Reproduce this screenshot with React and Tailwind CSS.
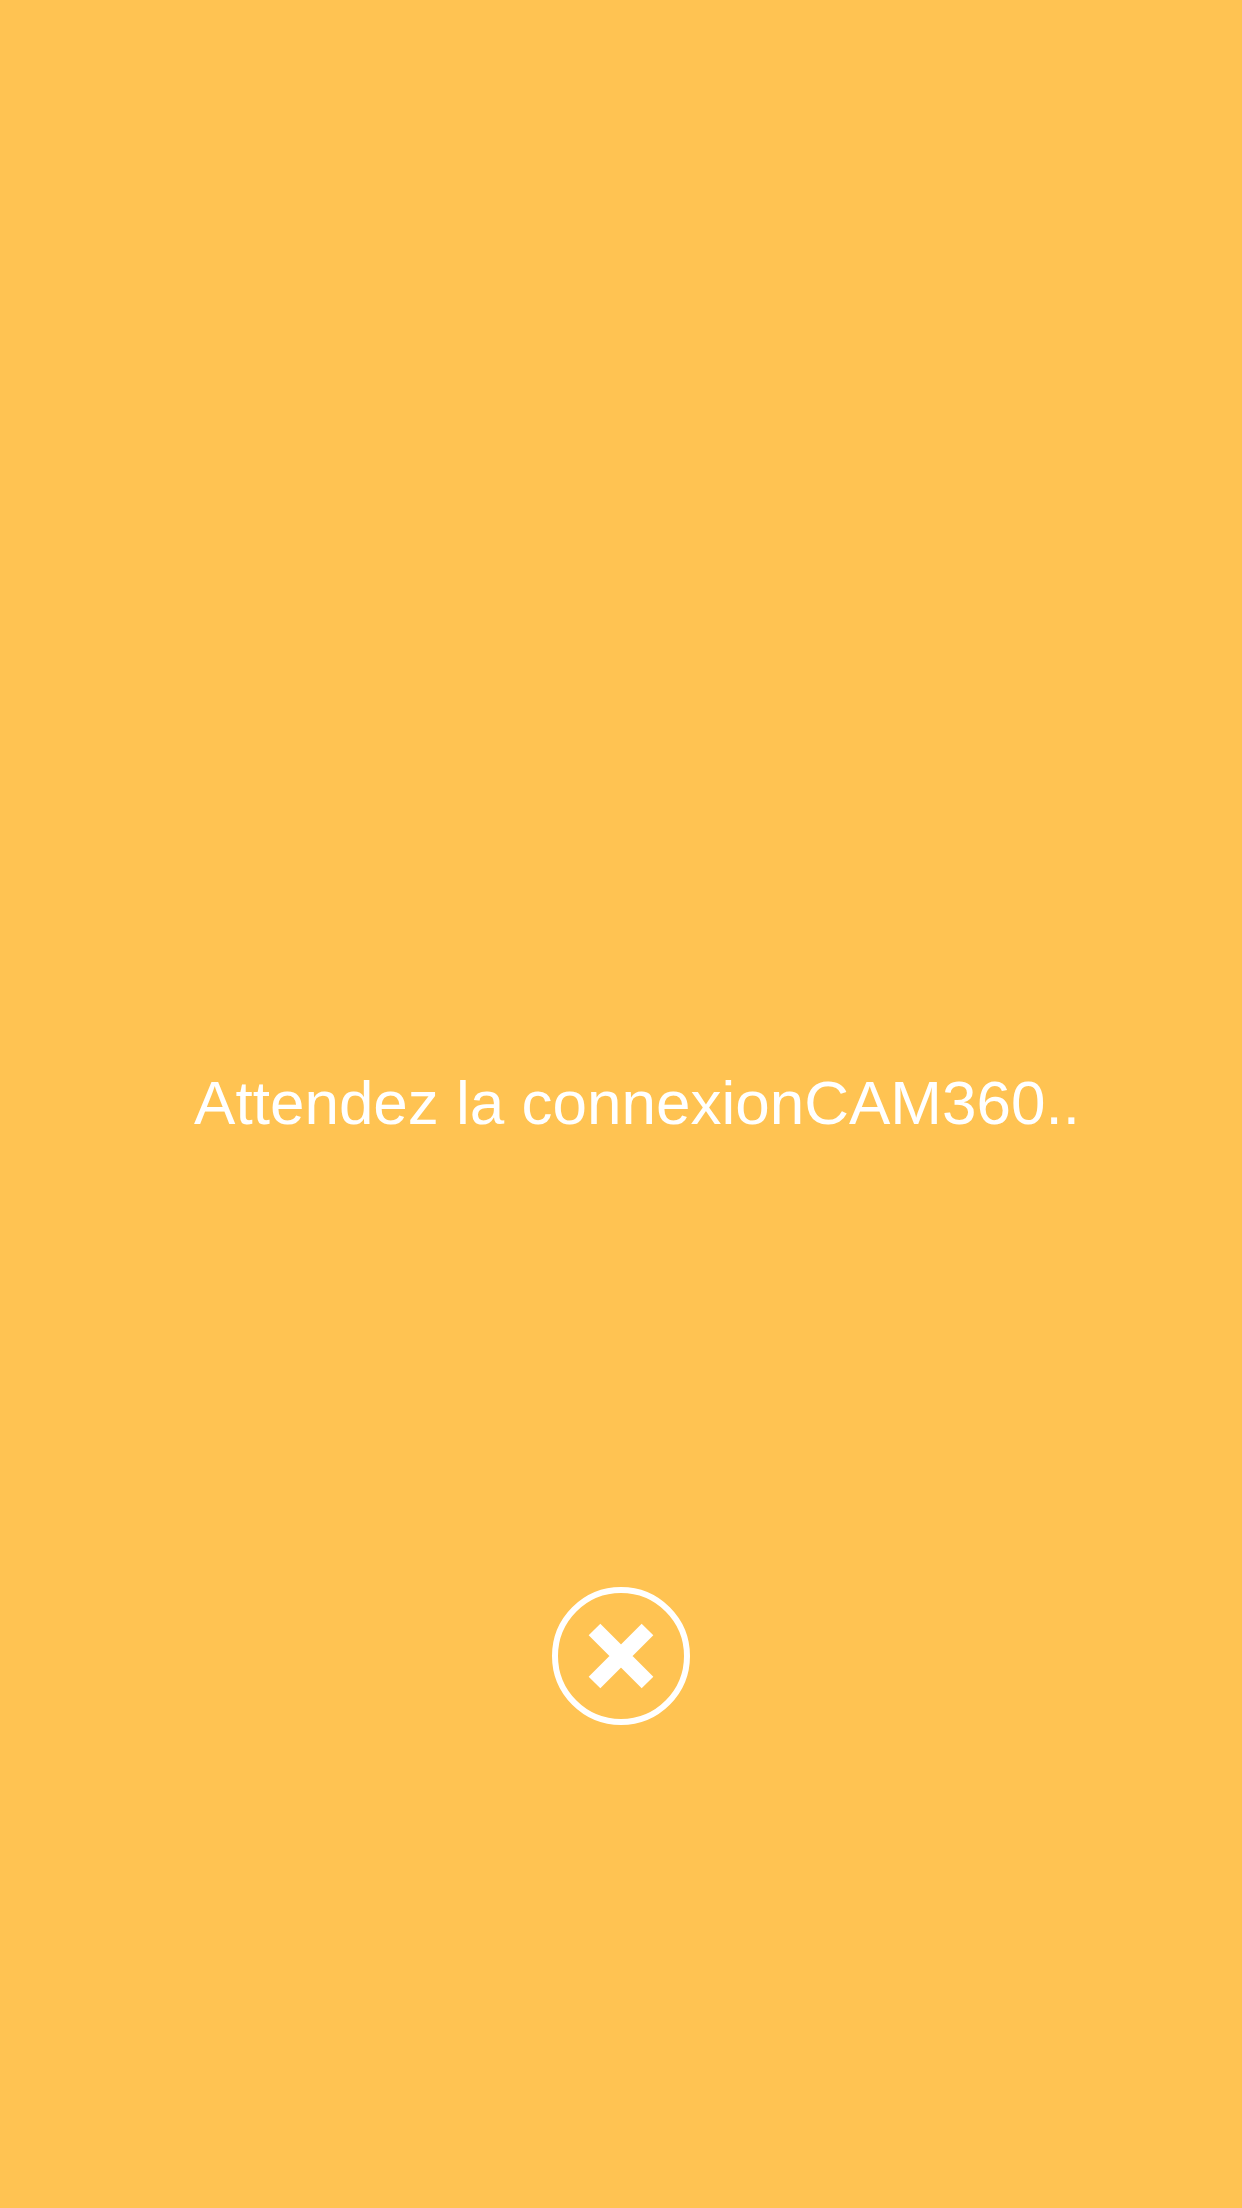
import { useState } from 'react';

export default function App() {
  const [cancelled, setCancelled] = useState(false);

  return (
    <main className="flex min-h-screen flex-col items-center bg-[#ffc352] font-['Liberation_Sans',Arial,sans-serif] text-white">
      <div className="h-[48vh]" />
      <p className="pl-8 text-[62px] leading-[86px]" role="status">
        {cancelled ? 'Connexion annulée' : 'Attendez la connexionCAM360..'}
      </p>
      <div className="h-[20vh]" />
      <button type="button" aria-label="Annuler" className="cursor-pointer rounded-full" onClick={() => setCancelled(true)}>
        <svg className="size-[138px]" viewBox="0 0 138 138" fill="none" stroke="currentColor">
          <circle cx="69" cy="69" r="66" strokeWidth="6" />
          <path d="M42.5 42.5L95.5 95.5M95.5 42.5L42.5 95.5" strokeWidth="16.5" />
        </svg>
      </button>
    </main>
  );
}
